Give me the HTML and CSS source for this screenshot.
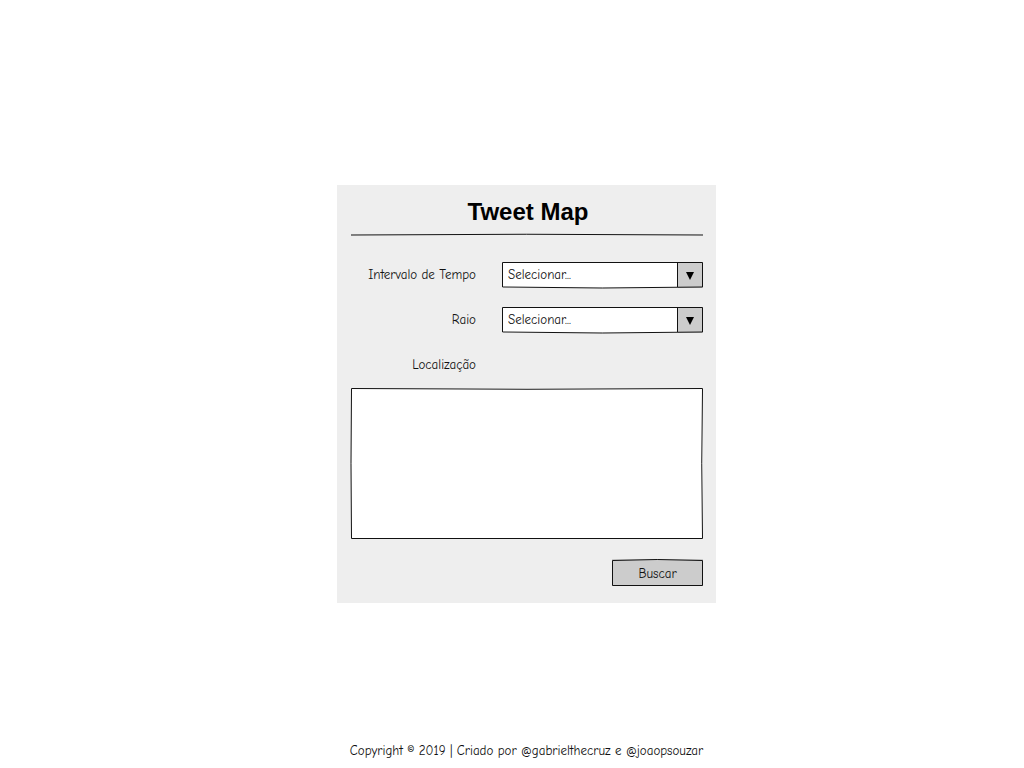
FILE: index.html
```html
<!DOCTYPE html>
<html lang="pt-BR">
<head>
<meta charset="utf-8">
<meta name="viewport" content="width=device-width, initial-scale=1">
<title>Tweet Map</title>
<link rel="stylesheet" href="styles.css">
</head>
<body>
<main class="main">
  <form class="card">
    <h1 class="title">Tweet Map</h1>
    <svg class="rule" viewBox="0 0 353 3" preserveAspectRatio="none" aria-hidden="true"><path d="M0 2Q176 .5 353 2"/></svg>
    <div class="row">
      <label class="label" for="tempo">Intervalo de Tempo</label>
      <div class="sketch">
        <select class="select" id="tempo"><option>Selecionar...</option></select>
        <svg class="frame" viewBox="0 0 201 26" preserveAspectRatio="none" aria-hidden="true"><path d="M.5 .5H200.5V25Q100 27 .5 25ZM175.5 .5V25"/></svg>
        <svg class="arrow" viewBox="0 0 8 8" aria-hidden="true"><path d="M0 0H8L4 8Z"/></svg>
      </div>
    </div>
    <div class="row">
      <label class="label" for="raio">Raio</label>
      <div class="sketch">
        <select class="select" id="raio"><option>Selecionar...</option></select>
        <svg class="frame" viewBox="0 0 201 26" preserveAspectRatio="none" aria-hidden="true"><path d="M.5 .5H200.5V25Q100 27 .5 25ZM175.5 .5V25"/></svg>
        <svg class="arrow" viewBox="0 0 8 8" aria-hidden="true"><path d="M0 0H8L4 8Z"/></svg>
      </div>
    </div>
    <div class="row">
      <label class="label" for="local">Localização</label>
    </div>
    <div class="sketch">
      <textarea class="area" id="local"></textarea>
      <svg class="frame" viewBox="0 0 352 151" preserveAspectRatio="none" aria-hidden="true"><path d="M.5 .5Q176 2 351.5 .5Q350 75 351.5 150.5H.5Q-.5 75 .5 .5Z"/></svg>
    </div>
    <div class="actions">
      <div class="sketch">
        <button class="button" type="submit">Buscar</button>
        <svg class="frame" viewBox="0 0 91 27" preserveAspectRatio="none" aria-hidden="true"><path d="M.5 1.5Q45 -.5 90.5 1.5V26.5H.5Z"/></svg>
      </div>
    </div>
  </form>
</main>
<footer class="footer">Copyright © 2019 | Criado por @gabrielthecruz e @joaopsouzar</footer>
</body>
</html>
```
FILE: styles.css
```css
* {
  box-sizing: border-box;
}

body {
  display: flex;
  flex-direction: column;
  align-items: center;
  min-height: 100vh;
  margin: 0;
  padding: 0 0 0 29px;
  background: #fff;
  color: #111;
  font: 13px/20px "Comic Sans MS", "Comic Neue", "Noto Sans", sans-serif;
}

.main {
  width: 100%;
  max-width: 379px;
  padding: 185px 0 32px;
}

.card {
  padding: 12px 13px 17px 14px;
  background: #eee;
}

.title {
  margin: 0;
  padding-left: 2px;
  color: #000;
  font: bold 24px/30px "Liberation Sans", Arial, sans-serif;
  text-align: center;
}

.rule {
  display: block;
  width: 100%;
  height: 3px;
  margin: 6px 0 26px;
  overflow: visible;
}

.rule path,
.frame path {
  fill: none;
  stroke: #111;
  stroke-width: 1px;
  stroke-linejoin: round;
}

.row {
  display: grid;
  grid-template-columns: 125fr 201fr;
  column-gap: 26px;
  align-items: center;
  min-height: 26px;
  margin-bottom: 19px;
}

.row:nth-of-type(3) {
  margin-bottom: 10px;
}

.label {
  text-align: right;
}

.sketch {
  position: relative;
}

.frame {
  position: absolute;
  inset: 0;
  width: 100%;
  height: 100%;
  overflow: visible;
  pointer-events: none;
}

.select,
.area,
.button {
  display: block;
  width: 100%;
  margin: 0;
  border: 0;
  border-radius: 0;
  color: inherit;
  font: inherit;
}

.select {
  height: 26px;
  padding: 0 30px 0 6px;
  appearance: none;
  background: linear-gradient(to left, #ccc 25px, #fff 25px);
}

.arrow {
  position: absolute;
  top: 10px;
  right: 9px;
  width: 8px;
  height: 8px;
  pointer-events: none;
}

.area {
  height: 151px;
  padding: 6px;
  resize: none;
  background: #fff;
}

.actions {
  display: flex;
  justify-content: flex-end;
  margin-top: 20px;
}

.button {
  min-width: 91px;
  height: 27px;
  padding: 2px 16px 0;
  background: #ccc;
}

.footer {
  margin-top: auto;
  padding-bottom: 7px;
  text-align: center;
}
```
